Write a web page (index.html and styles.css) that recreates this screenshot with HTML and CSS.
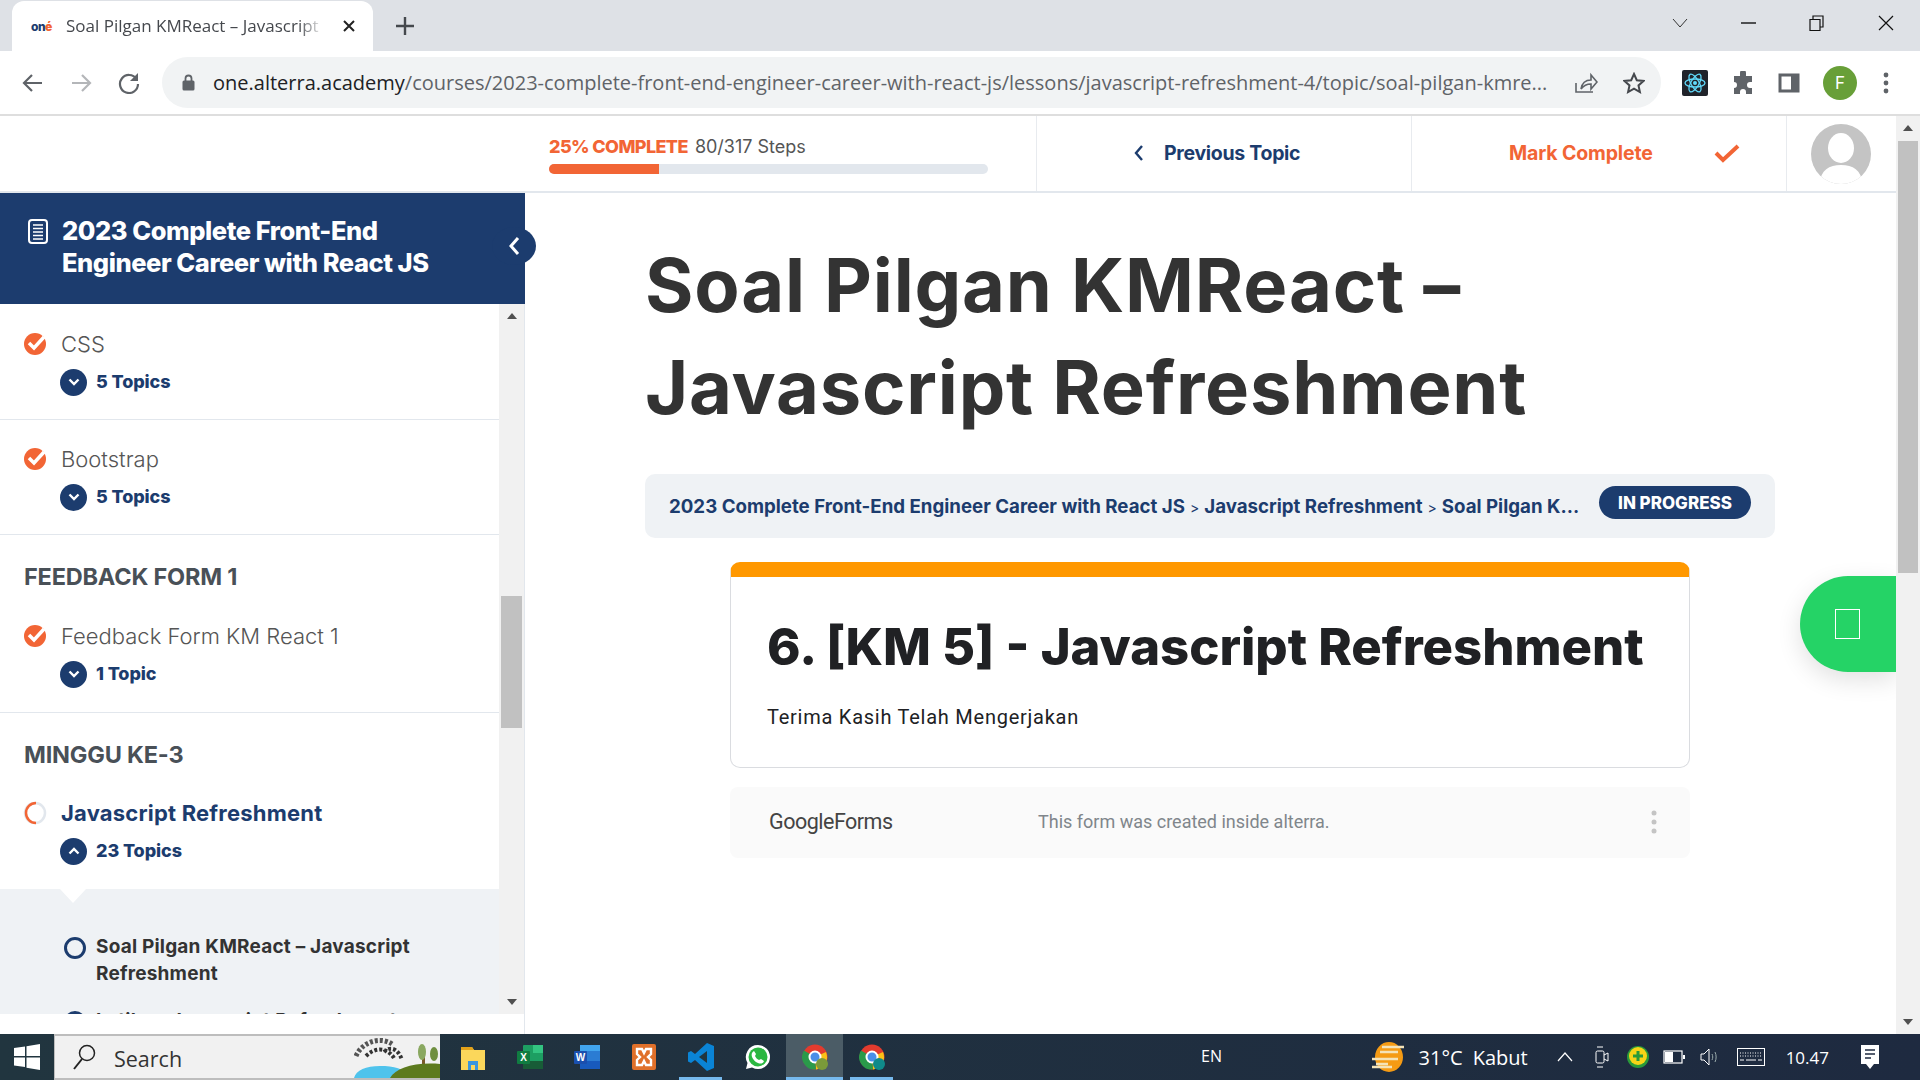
FILE: index.html
```html
<!DOCTYPE html>
<html lang="en">
<head>
  <meta charset="UTF-8" />
  <title>Soal Pilgan KMReact – Javascript Refreshment</title>
  <link rel="stylesheet" href="styles.css">
</head>
<body>
  <!-- browser chrome -->
  <div class="tabstrip">
    <div class="tab">
      <span class="favicon">on<b>é</b></span>
      <span class="tab-title">Soal Pilgan KMReact – Javascript Refreshment</span>
      <svg class="tab-close" width="12" height="12" viewBox="0 0 12 12"><path d="M1 1l10 10M11 1L1 11" stroke="#222" stroke-width="2"/></svg>
    </div>
    <svg class="new-tab" width="18" height="18" viewBox="0 0 18 18"><path d="M9 0v18M0 9h18" stroke="#45484d" stroke-width="2.4"/></svg>
    <div class="win-controls">
      <svg width="16" height="10" viewBox="0 0 16 10"><path d="M1 1l7 8 7-8" fill="none" stroke="#333" stroke-width="1"/></svg>
      <svg width="15" height="2" viewBox="0 0 15 2"><path d="M0 1h15" stroke="#111" stroke-width="1.4"/></svg>
      <svg width="16" height="16" viewBox="0 0 16 16"><path d="M1 4.500h10v11H1zM4 4.500V1h10v11h-3" fill="none" stroke="#111" stroke-width="1.200"/></svg>
      <svg width="16" height="16" viewBox="0 0 16 16"><path d="M1 1l14 14M15 1L1 15" stroke="#111" stroke-width="1.200"/></svg>
    </div>
  </div>

  <div class="toolbar">
    <svg class="nav-icon" width="22" height="20" viewBox="0 0 22 20"><path d="M20 10H3M10 2l-8 8 8 8" fill="none" stroke="#5f6368" stroke-width="2.200"/></svg>
    <svg class="nav-icon" width="22" height="20" viewBox="0 0 22 20"><path d="M2 10h17M12 2l8 8-8 8" fill="none" stroke="#b4b6b9" stroke-width="2.200"/></svg>
    <svg class="nav-icon" width="22" height="22" viewBox="0 0 22 22"><path d="M18.500 7A9 9 0 1 0 20 12" fill="none" stroke="#5f6368" stroke-width="2.200"/><path d="M20 1v8h-8z" fill="#5f6368"/></svg>
    <div class="omnibox">
      <svg class="lock" width="13" height="17" viewBox="0 0 13 17"><path d="M3.500 7V4.500a3 3 0 0 1 6 0V7" fill="none" stroke="#5f6368" stroke-width="1.800"/><rect x="0.500" y="6.500" width="12" height="10" rx="1.500" fill="#5f6368"/></svg>
      <div class="url"><span class="host">one.alterra.academy</span>/courses/2023-complete-front-end-engineer-career-with-react-js/lessons/javascript-refreshment-4/topic/soal-pilgan-kmre...</div>
      <svg class="omni-share" width="24" height="24" viewBox="0 0 24 24"><path d="M2 12v9h17M7 18c1-6 5-9 10-9V4l6 7-6 7v-5c-4 0-7 1-10 5z" fill="none" stroke="#5f6368" stroke-width="1.600"/></svg>
      <svg class="omni-star" width="22" height="22" viewBox="0 0 22 22"><path d="M11 2l2.800 6.200 6.700.7-5 4.500 1.400 6.600-5.900-3.400-5.900 3.400 1.400-6.600-5-4.500 6.700-.7z" fill="none" stroke="#45484d" stroke-width="2"/></svg>
    </div>
    <div class="ext-icons">
      <svg width="26" height="26" viewBox="0 0 26 26"><rect width="26" height="26" rx="2" fill="#20232a"/><g fill="none" stroke="#61dafb" stroke-width="1.300"><ellipse cx="13" cy="13" rx="10" ry="4"/><ellipse cx="13" cy="13" rx="10" ry="4" transform="rotate(60 13 13)"/><ellipse cx="13" cy="13" rx="10" ry="4" transform="rotate(120 13 13)"/></g><circle cx="13" cy="13" r="2" fill="#61dafb"/></svg>
      <svg width="24" height="24" viewBox="0 0 24 24"><path d="M9 2a3 3 0 0 1 6 0v3h6v6h-2a3 3 0 0 0 0 6h2v6h-6v-2a3 3 0 0 0-6 0v2H3v-6a3 3 0 0 0 0-6V5h6z" fill="#5f6368"/></svg>
      <svg width="22" height="20" viewBox="0 0 22 20"><path d="M2 2h18v16H2z" fill="none" stroke="#5f6368" stroke-width="3"/><rect x="13" y="2" width="7" height="16" fill="#5f6368"/></svg>
      <span class="profile">F</span>
      <svg class="dots" width="6" height="22" viewBox="0 0 6 22"><circle cx="3" cy="3" r="2.400" fill="#5f6368"/><circle cx="3" cy="11" r="2.400" fill="#5f6368"/><circle cx="3" cy="19" r="2.400" fill="#5f6368"/></svg>
    </div>
  </div>

  <!-- page -->
  <div class="page">
    <div class="page-inner">
      <div class="topbar">
        <div class="progress">
          <div class="progress-label"><b>25% COMPLETE</b> 80/317 Steps</div>
          <div class="progress-track"><div class="progress-fill" style="width:25%"></div></div>
        </div>
        <a class="top-action prev">
          <svg width="11" height="18" viewBox="0 0 11 18"><path d="M9 2L3 9l6 7" fill="none" stroke="#1c3c6e" stroke-width="2.400"/></svg>
          Previous Topic
        </a>
        <a class="top-action mark">
          Mark Complete
          <svg width="26" height="20" viewBox="0 0 26 20"><path d="M2 10l7 7L24 3" fill="none" stroke="#f26535" stroke-width="4"/></svg>
        </a>
        <div class="top-avatar">
          <svg width="60" height="60" viewBox="0 0 60 60"><defs><clipPath id="av"><ellipse cx="30" cy="30" rx="30" ry="30"/></clipPath></defs><g clip-path="url(#av)"><rect width="60" height="60" fill="#c4c4c4"/><ellipse cx="30" cy="24" rx="13" ry="15" fill="#fff"/><path d="M8 60c2-14 10-19 22-19s20 5 22 19z" fill="#fff"/></g></svg>
        </div>
      </div>

      <div class="layout">
        <aside class="sidebar">
          <div class="course-head">
            <svg width="20" height="25" viewBox="0 0 20 25"><rect x="1" y="1" width="18" height="23" rx="3" fill="none" stroke="#fff" stroke-width="2"/><path d="M5 6h10M5 9.500h10M5 13h10M5 16.500h10M5 20h10" stroke="#fff" stroke-width="1.500"/></svg>
            <h2>2023 Complete Front-End Engineer Career with React JS</h2>
            <span class="collapse-btn">
              <svg width="12" height="20" viewBox="0 0 12 20"><path d="M10 2l-7 8 7 8" fill="none" stroke="#fff" stroke-width="3"/></svg>
            </span>
          </div>
          <div class="course-body">
            <div class="lessons">
              <div class="lesson">
                <div class="lesson-title"><svg class="status" width="24" height="24" viewBox="0 0 24 24"><circle cx="12" cy="12" r="11" fill="#f26535"/><path d="M6 11l5 5 10-11" fill="none" stroke="#fff" stroke-width="3.500"/></svg>CSS</div>
                <div class="topic-count"><span class="toggle"><svg width="12" height="8" viewBox="0 0 12 8"><path d="M1.500 1.500L6 6l4.500-4.500" fill="none" stroke="#fff" stroke-width="2.400"/></svg></span>5 Topics</div>
              </div>
              <div class="lesson">
                <div class="lesson-title"><svg class="status" width="24" height="24" viewBox="0 0 24 24"><circle cx="12" cy="12" r="11" fill="#f26535"/><path d="M6 11l5 5 10-11" fill="none" stroke="#fff" stroke-width="3.500"/></svg>Bootstrap</div>
                <div class="topic-count"><span class="toggle"><svg width="12" height="8" viewBox="0 0 12 8"><path d="M1.500 1.500L6 6l4.500-4.500" fill="none" stroke="#fff" stroke-width="2.400"/></svg></span>5 Topics</div>
              </div>
              <div class="section-title">FEEDBACK FORM 1</div>
              <div class="lesson feedback">
                <div class="lesson-title"><svg class="status" width="24" height="24" viewBox="0 0 24 24"><circle cx="12" cy="12" r="11" fill="#f26535"/><path d="M6 11l5 5 10-11" fill="none" stroke="#fff" stroke-width="3.500"/></svg>Feedback Form KM React 1</div>
                <div class="topic-count"><span class="toggle"><svg width="12" height="8" viewBox="0 0 12 8"><path d="M1.500 1.500L6 6l4.500-4.500" fill="none" stroke="#fff" stroke-width="2.400"/></svg></span>1 Topic</div>
              </div>
              <div class="section-title">MINGGU KE-3</div>
              <div class="lesson current">
                <div class="lesson-title"><svg class="status" width="24" height="24" viewBox="0 0 24 24"><circle cx="12" cy="12" r="10" fill="none" stroke="#e2e7ed" stroke-width="2.500"/><path d="M13 2A10 10 0 0 0 13 22" fill="none" stroke="#f26535" stroke-width="2.500"/></svg>Javascript Refreshment</div>
                <div class="topic-count"><span class="toggle"><svg width="12" height="8" viewBox="0 0 12 8"><path d="M1.500 6.500L6 2l4.500 4.500" fill="none" stroke="#fff" stroke-width="2.400"/></svg></span>23 Topics</div>
              </div>
              <div class="sublist">
                <div class="subitem"><span class="ring"></span>Soal Pilgan KMReact – Javascript Refreshment</div>
                <div class="subitem"><span class="ring"></span>Latihan Javascript Refreshment</div>
              </div>
            </div>
            <div class="side-scroll">
              <span class="arrow-up"></span>
              <span class="side-thumb"></span>
              <span class="arrow-down"></span>
            </div>
          </div>
        </aside>

        <main class="content">
          <h1>Soal Pilgan KMReact –<br>Javascript Refreshment</h1>
          <div class="crumbs">
            <div class="crumb-text">2023 Complete Front-End Engineer Career with React JS<i>&gt;</i>Javascript Refreshment<i>&gt;</i>Soal Pilgan K...</div>
            <span class="badge">IN PROGRESS</span>
          </div>
          <div class="form-card">
            <h3>6. [KM 5] - Javascript Refreshment</h3>
            <p>Terima Kasih Telah Mengerjakan</p>
          </div>
          <div class="form-footer">
            <span class="gforms"><b>Google</b>Forms</span>
            <span class="form-note">This form was created inside alterra.</span>
            <svg width="6" height="24" viewBox="0 0 6 24"><circle cx="3" cy="3" r="2.500" fill="#c4c4c4"/><circle cx="3" cy="12" r="2.500" fill="#c4c4c4"/><circle cx="3" cy="21" r="2.500" fill="#c4c4c4"/></svg>
          </div>
          <div class="chat-btn"><span class="tofu"></span></div>
        </main>
      </div>
    </div>

    <div class="page-scroll">
      <span class="arrow-up"></span>
      <span class="page-thumb"></span>
      <span class="arrow-down"></span>
    </div>
  </div>

  <!-- windows taskbar -->
  <div class="taskbar">
    <svg class="win-logo" width="26" height="26" viewBox="0 0 26 26"><path d="M0 4l11-1.500V12H0zM12.500 2.300L26 0v12H12.500zM0 13.500h11V23L0 21.500zM12.500 13.500H26V26l-13.500-2.200z" fill="#fff"/></svg>
    <div class="search">
      <svg width="24" height="26" viewBox="0 0 24 26"><circle cx="15" cy="9" r="7.500" fill="none" stroke="#222" stroke-width="1.500"/><path d="M10 15L2 25" stroke="#222" stroke-width="2"/></svg>
      <span>Search</span>
      <svg class="search-art" width="86" height="44" viewBox="0 0 86 44"><path d="M2 22C8 8 26 2 38 10" fill="none" stroke="#555" stroke-width="5" stroke-dasharray="3 2"/><path d="M12 22C20 14 32 12 40 24 M30 18c6-6 14-4 18 8" fill="none" stroke="#333" stroke-width="4" stroke-dasharray="3 2"/><rect x="68" y="20" width="3" height="10" fill="#7a5a2a"/><ellipse cx="68" cy="18" rx="4" ry="8" fill="#8aa860"/><ellipse cx="80" cy="20" rx="4" ry="7" fill="#6f8f3f"/><path d="M0 44c2-8 12-12 26-12 14 0 24 2 30 12z" fill="#4fc3ec"/><path d="M36 44c6-10 24-16 50-14v14z" fill="#5d7a1e"/></svg>
    </div>
    <div class="task-apps">
      <span class="app"><svg width="24" height="26" viewBox="0 0 24 26"><path d="M0 3h11l2 3h11v20H0z" fill="#fbd75b"/><path d="M0 3h11l2 3H0z" fill="#e3a21a"/><path d="M7 26v-9h10v9h-3v-5h-4v5z" fill="#3a96dd"/></svg></span>
      <span class="app"><svg width="26" height="26" viewBox="0 0 26 26"><rect x="6" y="1" width="20" height="24" rx="1" fill="#1d9e62"/><rect x="16" y="1" width="10" height="8" fill="#33c481"/><rect x="6" y="17" width="20" height="8" fill="#185c37"/><rect x="0" y="7" width="13" height="13" rx="1" fill="#107c41"/><text x="6.500" y="17" class="app-letter">X</text></svg></span>
      <span class="app"><svg width="26" height="26" viewBox="0 0 26 26"><rect x="6" y="1" width="20" height="24" rx="1" fill="#2b7cd3"/><rect x="6" y="1" width="20" height="6" fill="#41a5ee"/><rect x="6" y="17" width="20" height="8" fill="#185abd"/><rect x="0" y="7" width="13" height="13" rx="1" fill="#1a4fae"/><text x="6.500" y="17" class="app-letter">W</text></svg></span>
      <span class="app"><svg width="24" height="26" viewBox="0 0 24 26"><rect width="24" height="26" rx="2" fill="#e0702a"/><path d="M5 5h5l2 4 2-4h5v5l-3 3 3 3v5h-5l-2-4-2 4H5v-5l3-3-3-3z" fill="none" stroke="#fff" stroke-width="2.400"/></svg></span>
      <span class="app used"><svg width="26" height="28" viewBox="0 0 26 28"><path d="M19 0l7 3v22l-7 3L7 17l-4 3-3-1.500v-9L3 8l4 3z" fill="#0a84d6"/><path d="M19 8v12l-8-6z" fill="#21353f"/></svg></span>
      <span class="app"><svg width="26" height="26" viewBox="0 0 26 26"><path d="M13 1a12 12 0 0 1 0 24c-2 0-4-.5-6-1.500L1 25l1.500-6A12 12 0 0 1 13 1z" fill="#fff"/><circle cx="13" cy="13" r="9.500" fill="#2bb741"/><path d="M9 7l2 3-1 2c1 2 2 3 4 4l2-1 3 2c-1 3-4 3-6 2-3-1-5-4-6-6-1-3 0-5 2-6z" fill="#fff"/></svg></span>
      <span class="app active used"><svg width="26" height="26" viewBox="0 0 26 26"><circle cx="13" cy="13" r="12.500" fill="#e33b2e"/><path d="M13 13L24 8a12.500 12.500 0 0 1-10 17.500z" fill="#fbc116"/><path d="M13 13l1 12.500A12.500 12.500 0 0 1 2 6.500z" fill="#2a9a4a"/><circle cx="13" cy="13" r="5.500" fill="#4a8fe8" stroke="#fff" stroke-width="2"/><circle cx="20" cy="20" r="6" fill="#7a9a3a"/></svg></span>
      <span class="app used"><svg width="26" height="26" viewBox="0 0 26 26"><circle cx="13" cy="13" r="12.500" fill="#e33b2e"/><path d="M13 13L24 8a12.500 12.500 0 0 1-10 17.500z" fill="#fbc116"/><path d="M13 13l1 12.500A12.500 12.500 0 0 1 2 6.500z" fill="#2a9a4a"/><circle cx="13" cy="13" r="5.500" fill="#4a8fe8" stroke="#fff" stroke-width="2"/><circle cx="20" cy="20" r="6" fill="#0f8a8a"/></svg></span>
    </div>
    <span class="lang">EN</span>
    <div class="tray">
      <svg class="weather" width="36" height="30" viewBox="0 0 36 30"><ellipse cx="19" cy="15" rx="14" ry="15" fill="#f59b14"/><path d="M12 5h22M10 10h18M2 17h26M6 22h12M2 25h20" stroke="#f4e3b8" stroke-width="2.400"/></svg>
      <span class="temp">31°C</span>
      <span class="temp cond">Kabut</span>
      <svg class="tray-chevron" width="16" height="10" viewBox="0 0 16 10"><path d="M1 9l7-8 7 8" fill="none" stroke="#fff" stroke-width="1.200"/></svg>
      <svg class="tray-video" width="14" height="24" viewBox="0 0 14 24"><rect x="1" y="6" width="8" height="12" rx="1.500" fill="none" stroke="#fff"/><path d="M9 10l4-2v8l-4-2M2 2h6M2 22h6" fill="none" stroke="#fff"/></svg>
      <svg class="tray-plus" width="22" height="22" viewBox="0 0 22 22"><circle cx="11" cy="11" r="11" fill="#2a9a3a"/><circle cx="11" cy="10" r="9" fill="#f7d417"/><path d="M11 5v10M6 10h10" stroke="#2a9a3a" stroke-width="3"/></svg>
      <svg width="22" height="14" viewBox="0 0 22 14"><rect x="1" y="1" width="18" height="12" fill="none" stroke="#fff" stroke-width="1.200"/><rect x="2" y="2" width="8" height="10" fill="#fff"/><rect x="20" y="5" width="2" height="4" fill="#fff"/></svg>
      <svg class="tray-sound" width="18" height="20" viewBox="0 0 18 20"><path d="M1 7h3l5-5v16l-5-5H1z" fill="none" stroke="#fff"/><path d="M12 7c1 2 1 4 0 6M15 5c1.500 3 1.500 7 0 10" fill="none" stroke="#9aa" /></svg>
      <svg class="tray-keys" width="28" height="18" viewBox="0 0 28 18"><rect x="0.500" y="0.500" width="27" height="17" fill="none" stroke="#fff"/><path d="M3 5h22M3 8h22" stroke="#fff" stroke-dasharray="1 1.500"/><path d="M3 12h4M9 12h10M21 12h4" stroke="#fff"/></svg>
      <span class="clock">10.47</span>
      <svg class="notif" width="18" height="25" viewBox="0 0 18 25"><path d="M0 0h18v19h-5l-4 5-4-5H0z" fill="#fff"/><path d="M4 5h10M4 9h10M4 13h6" stroke="#1e2a40" stroke-width="1.300"/></svg>
    </div>
  </div>
</body>
</html>
```

FILE: styles.css
```css
* {
  box-sizing: border-box;
}
body {
  margin: 0;
  height: 1080px;
  overflow: hidden;
  display: flex;
  flex-direction: column;
  font-family: Inter, "Noto Sans", sans-serif;
  background-color: #fff;
  color: #333;
}

/* browser chrome */
.tabstrip {
  height: 51px;
  background-color: #dee1e6;
  display: flex;
  align-items: center;
  flex-shrink: 0;
}
.tab {
  width: 361px;
  height: 51px;
  margin-left: 12px;
  margin-top: 1px;
  background-color: #fff;
  border-radius: 12px 12px 0 0;
  display: flex;
  align-items: center;
  padding-left: 19px;
}
.favicon {
  width: 25px;
  font-size: 12px;
  font-weight: 800;
  letter-spacing: -0.5px;
  color: #1c3c6e;
  flex-shrink: 0;
}
.favicon b {
  color: #f26535;
}
.tab-title {
  margin-left: 10px;
  margin-top: -2px;
  width: 258px;
  white-space: nowrap;
  overflow: hidden;
  font-family: "Open Sans", sans-serif;
  font-size: 17px;
  color: #45484d;
  -webkit-mask-image: linear-gradient(to right, #000 90%, transparent);
}
.tab-close {
  margin-left: 19px;
}
.new-tab {
  margin-left: 23px;
}
.win-controls {
  margin-left: auto;
  display: flex;
  align-items: center;
  gap: 53px;
  padding-right: 26px;
  margin-top: -5px;
}
.toolbar {
  height: 65px;
  background-color: #fff;
  border-bottom: 2px solid #dedede;
  display: flex;
  align-items: center;
  padding-left: 22px;
  gap: 26px;
  flex-shrink: 0;
}
.omnibox {
  margin-left: -4px;
  width: 1499px;
  height: 51px;
  border-radius: 26px;
  background-color: #f1f3f4;
  display: flex;
  align-items: center;
  padding-left: 20px;
}
.lock {
  flex-shrink: 0;
}
.url {
  margin-left: 18px;
  width: 1347px;
  flex-shrink: 0;
  white-space: nowrap;
  font-family: "Open Sans", sans-serif;
  font-size: 20px;
  color: #5f6368;
}
.url .host {
  color: #202124;
}
.omni-share {
  margin-left: 14px;
  flex-shrink: 0;
}
.omni-star {
  margin-left: 25px;
  flex-shrink: 0;
}
.ext-icons {
  display: flex;
  align-items: center;
  gap: 23px;
  margin-left: -5px;
}
.profile {
  width: 34px;
  height: 34px;
  border-radius: 50%;
  background-color: #689f38;
  color: #fff;
  font-size: 17px;
  display: flex;
  align-items: center;
  justify-content: center;
}
.dots {
  margin-left: 3px;
}

/* page */
.page {
  flex: 1;
  display: flex;
  min-height: 0;
}
.page-inner {
  flex: 1;
  display: flex;
  flex-direction: column;
  min-width: 0;
}
.topbar {
  height: 77px;
  border-bottom: 2px solid #e2e7ed;
  display: flex;
  align-items: stretch;
  padding-left: 549px;
  flex-shrink: 0;
}
.progress {
  width: 487px;
  padding-right: 48px;
  padding-top: 18px;
}
.progress-label {
  font-size: 18px;
  line-height: 26px;
  color: #555;
}
.progress-label b {
  color: #f26535;
  font-weight: 800;
  letter-spacing: -0.6px;
  margin-right: 2px;
}
.progress-track {
  height: 10px;
  margin-top: 4px;
  border-radius: 5px;
  background-color: #e2e7ed;
  overflow: hidden;
}
.progress-fill {
  height: 100%;
  background-color: #f26535;
}
.top-action {
  width: 375px;
  border-left: 1px solid #e8ebef;
  display: flex;
  align-items: center;
  padding-bottom: 2px;
  font-size: 19.500px;
  font-weight: 700;
  letter-spacing: -0.3px;
}
.top-action.prev {
  color: #1c3c6e;
  gap: 20px;
  padding-left: 96px;
}
.top-action.mark {
  color: #f26535;
  gap: 61px;
  padding-left: 97px;
  letter-spacing: -0.15px;
}
.top-avatar {
  flex: 1;
  border-left: 1px solid #e8ebef;
  padding: 8px 0 0 24px;
}

.layout {
  flex: 1;
  display: flex;
  min-height: 0;
}
.sidebar {
  width: 525px;
  flex-shrink: 0;
  display: flex;
  flex-direction: column;
  padding-bottom: 20px;
  border-right: 1px solid #e2e7ed;
}
.course-head {
  position: relative;
  height: 111px;
  background-color: #1c3c6e;
  display: flex;
  align-items: flex-start;
  padding: 22px 60px 0 28px;
  gap: 14px;
  margin-right: -1px;
  flex-shrink: 0;
}
.course-head svg {
  margin-top: 4px;
  flex-shrink: 0;
}
.course-head h2 {
  margin: 0;
  font-size: 25.500px;
  line-height: 32px;
  font-weight: 800;
  letter-spacing: -0.45px;
  color: #fff;
}
.collapse-btn {
  position: absolute;
  left: 492px;
  top: 34px;
  width: 44px;
  height: 38px;
  border-radius: 50%;
  background-color: #1c3c6e;
  display: flex;
  align-items: center;
  justify-content: center;
}
.collapse-btn svg {
  margin-top: 0;
}
.course-body {
  flex: 1;
  display: flex;
  min-height: 0;
}
.lessons {
  flex: 1;
  overflow: hidden;
  padding-top: 1px;
}
.lesson {
  padding: 23px 0 23px 25px;
  border-bottom: 1px solid #e2e7ed;
}
.lesson.feedback {
  padding-bottom: 24px;
}
.lesson.current {
  border-bottom: none;
  padding: 22px 0 24px 25px;
}
.lesson-title {
  display: flex;
  align-items: center;
  font-size: 22px;
  line-height: 32px;
  color: #555;
  font-weight: 300;
}
.status {
  margin-right: 14px;
  margin-left: -2px;
}
.current .lesson-title {
  color: #1c3c6e;
  font-weight: 700;
  letter-spacing: 0.2px;
}
.topic-count {
  margin-top: 8px;
  margin-left: 35px;
  display: flex;
  align-items: center;
  gap: 9px;
  font-size: 18px;
  line-height: 28px;
  font-weight: 800;
  letter-spacing: -0.1px;
  color: #1c3c6e;
}
.toggle {
  width: 27px;
  height: 27px;
  border-radius: 50%;
  background-color: #1c3c6e;
  display: flex;
  align-items: center;
  justify-content: center;
}
.section-title {
  padding: 28px 0 6px 24px;
  font-size: 23.500px;
  line-height: 28px;
  font-weight: 700;
  letter-spacing: -0.2px;
  color: #495057;
}
.sublist {
  position: relative;
  background-color: #eff2f5;
  padding: 44px 60px 0 63px;
}
.sublist::before {
  content: "";
  position: absolute;
  left: 60px;
  top: 0;
  border-left: 13px solid transparent;
  border-right: 13px solid transparent;
  border-top: 14px solid #fff;
}
.subitem {
  display: flex;
  align-items: flex-start;
  gap: 10px;
  font-size: 19px;
  line-height: 27px;
  font-weight: 700;
  letter-spacing: 0.2px;
  color: #333;
  padding-bottom: 20px;
}
.ring {
  width: 22px;
  height: 22px;
  margin-top: 4px;
  margin-left: 1px;
  flex-shrink: 0;
  border: 3px solid #1c3c6e;
  border-radius: 50%;
}
.side-scroll,
.page-scroll {
  background-color: #f1f1f1;
  display: flex;
  flex-direction: column;
  align-items: center;
  flex-shrink: 0;
  position: relative;
}
.side-scroll {
  width: 25px;
}
.page-scroll {
  width: 24px;
}
.arrow-up,
.arrow-down {
  position: absolute;
  left: 50%;
  margin-left: -5px;
  border-left: 5px solid transparent;
  border-right: 5px solid transparent;
}
.arrow-up {
  top: 9px;
  border-bottom: 6px solid #505050;
}
.arrow-down {
  bottom: 9px;
  border-top: 6px solid #505050;
}
.side-thumb {
  width: 21px;
  height: 132px;
  margin-top: 292px;
  background-color: #c1c1c1;
}
.page-thumb {
  width: 20px;
  height: 432px;
  margin-top: 25px;
  background-color: #c1c1c1;
}

/* main content */
.content {
  position: relative;
  flex: 1;
  min-width: 0;
  padding: 0 121px 0 120px;
}
.content h1 {
  margin: 41px 0 0;
  font-size: 74px;
  line-height: 102px;
  font-weight: 700;
  letter-spacing: 0.8px;
  color: #333;
  white-space: nowrap;
}
.crumbs {
  height: 64px;
  margin-top: 36px;
  background-color: #eff2f5;
  border-radius: 10px;
  display: flex;
  align-items: center;
  padding: 0 24px 0 24px;
}
.crumb-text {
  flex: 1;
  white-space: nowrap;
  overflow: hidden;
  font-size: 18.700px;
  font-weight: 700;
  color: #1c3c6e;
}
.crumb-text i {
  font-style: normal;
  font-size: 14px;
  font-weight: 400;
  margin: 0 5px;
}
.badge {
  width: 152px;
  height: 33px;
  margin-top: -7px;
  flex-shrink: 0;
  border-radius: 17px;
  background-color: #1c3c6e;
  color: #fff;
  font-size: 17px;
  font-weight: 800;
  display: flex;
  align-items: center;
  justify-content: center;
}
.form-card {
  width: 960px;
  height: 206px;
  margin: 24px 0 0 85px;
  border: 1px solid #dadce0;
  border-top: 15px solid #ff9800;
  border-radius: 10px;
  padding: 42px 36px 0;
}
.form-card h3 {
  margin: 0;
  font-size: 50.800px;
  line-height: 56px;
  font-weight: 800;
  color: #202124;
  white-space: nowrap;
}
.form-card p {
  margin: 30px 0 0;
  font-family: Roboto, sans-serif;
  font-size: 20px;
  letter-spacing: 0.75px;
  color: #202124;
}
.form-footer {
  width: 960px;
  height: 71px;
  margin: 19px 0 0 85px;
  background-color: #fafafa;
  border-radius: 8px;
  display: flex;
  align-items: center;
  padding: 0 33px 2px 39px;
  font-family: Roboto, sans-serif;
}
.gforms {
  width: 269px;
  font-size: 21.500px;
  color: #444;
  letter-spacing: -0.5px;
}
.gforms b {
  font-weight: 400;
}
.form-note {
  flex: 1;
  font-size: 18px;
  color: #80868b;
}
.chat-btn {
  position: absolute;
  right: 0;
  top: 383px;
  width: 96px;
  height: 96px;
  border-radius: 48px 0 0 48px;
  background-color: #25d366;
  box-shadow: 0 8px 24px rgba(0, 0, 0, 0.12);
  display: flex;
  align-items: center;
  justify-content: center;
}
.tofu {
  width: 25px;
  height: 30px;
  margin-right: 2px;
  border: 1px solid #fff;
}

/* taskbar */
.taskbar {
  height: 46px;
  flex-shrink: 0;
  background: linear-gradient(to right, #21353f, #1e2a40);
  display: flex;
  align-items: center;
  color: #fff;
}
.win-logo {
  margin-left: 14px;
}
.search {
  position: relative;
  width: 386px;
  height: 46px;
  margin-left: 14px;
  background-color: #f1f1f1;
  border-top: 2px solid #bdbdbd;
  border-bottom: 2px solid #bdbdbd;
  border-left: 1px solid #bdbdbd;
  display: flex;
  align-items: center;
  padding-left: 17px;
  gap: 18px;
  color: #333;
  font-family: "Open Sans", sans-serif;
  font-size: 21.500px;
  overflow: hidden;
}
.search span {
  margin-top: 3px;
}
.search-art {
  position: absolute;
  right: 0;
  bottom: 0;
}
.task-apps {
  display: flex;
  height: 46px;
  margin-left: 4px;
}
.app {
  position: relative;
  width: 57px;
  height: 46px;
  display: flex;
  align-items: center;
  justify-content: center;
}
.app.used::after {
  content: "";
  position: absolute;
  left: 7px;
  right: 7px;
  bottom: 0;
  height: 3px;
  background-color: #76b9ed;
}
.app.active {
  background-color: #4b5c66;
}
.app.active::after {
  left: 0;
  right: 0;
}
.app-letter {
  font-family: "Liberation Sans", sans-serif;
  font-size: 10px;
  font-weight: 700;
  fill: #fff;
  text-anchor: middle;
}
.lang {
  margin-left: 301px;
  margin-top: -3px;
  font-family: "Open Sans", sans-serif;
  font-size: 16px;
}
.tray {
  margin-left: auto;
  display: flex;
  align-items: center;
  gap: 14px;
  padding-right: 41px;
  font-family: "Open Sans", sans-serif;
}
.temp {
  font-size: 20px;
  margin-left: -1px;
}
.temp.cond {
  margin-left: -4px;
}
.tray-chevron {
  margin-left: 15px;
}
.tray-video {
  margin-left: 8px;
}
.tray-plus {
  margin-left: 4px;
}
.tray-sound {
  margin-left: 1px;
}
.tray-keys {
  margin-left: 5px;
}
.clock {
  font-size: 17px;
  margin-left: 7px;
}
.notif {
  margin-left: 18px;
}
```
